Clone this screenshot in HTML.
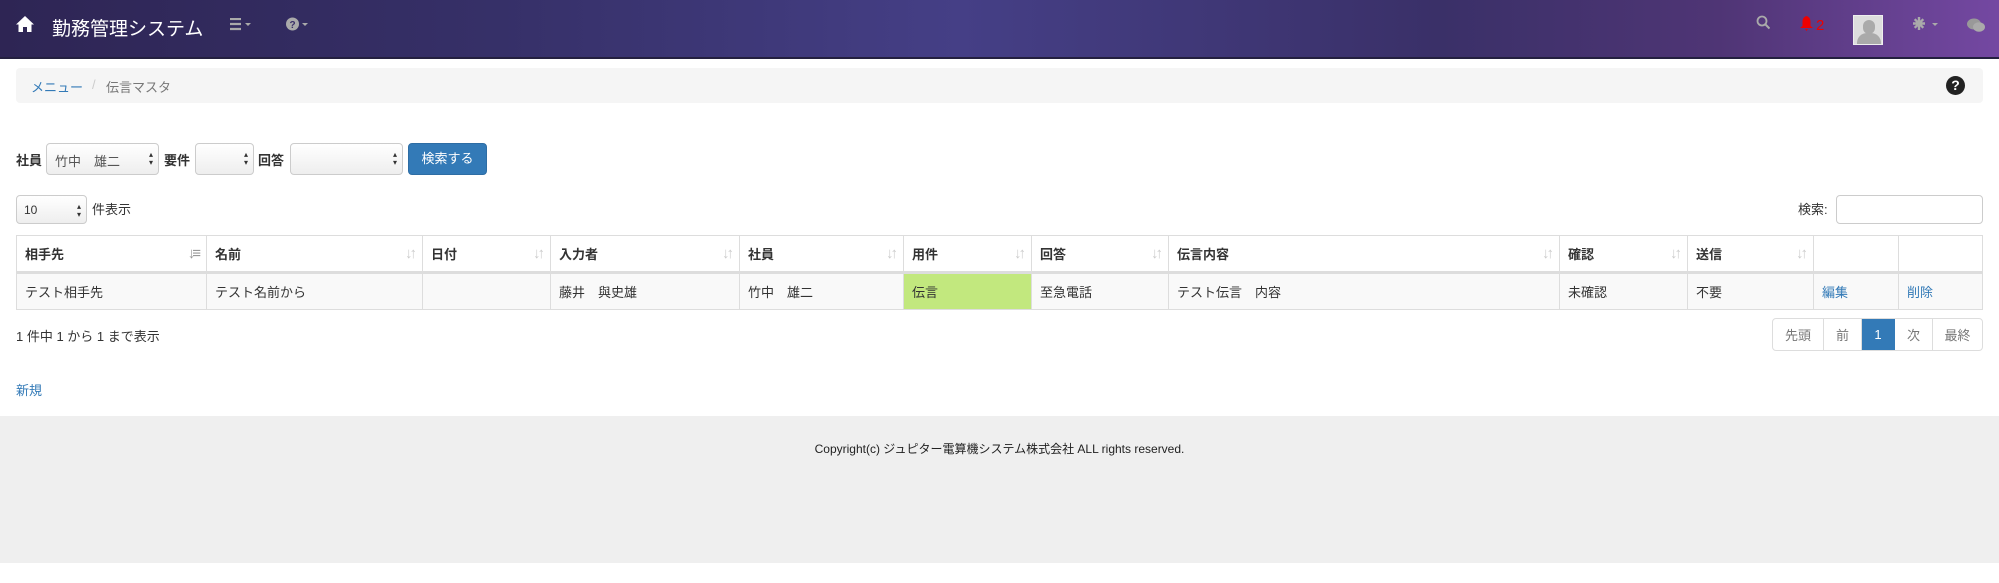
<!DOCTYPE html>
<html><head><meta charset="utf-8"><style>
*{box-sizing:border-box;margin:0;padding:0}
body{width:1999px;height:583px;overflow:hidden;background:#fff;font-family:"Liberation Sans","Noto Sans CJK JP",sans-serif;font-size:13px;color:#333;position:relative}
.a{position:absolute}
.nav{left:0;top:0;width:1999px;height:59px;background:linear-gradient(90deg,#2e2554 0%,#363068 25%,#453f86 48%,#3a3068 72%,#4f3575 86%,#7448a2 100%);border-bottom:2px solid #24203f}
.t{color:#fff;font-size:19px;left:52px;top:14px}
.g{color:#aaa}
.bc{left:16px;top:68px;width:1967px;height:35px;background:#f5f5f5;border-radius:4px}
.sel{border:1px solid #ccc;border-radius:4px;background:linear-gradient(#fff,#eee);height:32px}
.sel:after{content:"▴\A▾";white-space:pre;position:absolute;right:5px;top:7px;font-size:8px;line-height:8px;color:#333}
b{font-weight:bold}
table{position:absolute;left:16px;top:235px;border-collapse:collapse;width:1967px}
td,th{border:1px solid #ddd;padding:0 8px;text-align:left;font-size:13px}
th{height:37px;position:relative;border-bottom:3px solid #ddd}
th i{position:absolute;right:8px;top:9px;color:#ccc;font-style:normal;font-size:15px;font-weight:bold;letter-spacing:-3px}
td{height:37px;background:#f9f9f9}
.lk{color:#337ab7}
.pg{top:318px;height:33px;border:1px solid #ddd;border-radius:4px;display:flex;left:1772px;width:211px;overflow:hidden}
.pg span{border-right:1px solid #ddd;display:flex;align-items:center;justify-content:center;color:#777}
</style></head><body>
<div class="a nav">
<svg class="a" style="left:16px;top:15px" width="18" height="18" viewBox="0 0 18 18"><path d="M9 1L0 9.5h2.5V17h4.5v-5h4v5h4.5V9.5H18z" fill="#fff"/></svg>
<div class="a t">勤務管理システム</div>
<svg class="a" style="left:230px;top:18px" width="30" height="14"><path d="M0 1h11M0 6h11M0 11h11" stroke="#aaa" stroke-width="2.2"/><path d="M15 5h6l-3 3z" fill="#aaa"/></svg>
<svg class="a" style="left:286px;top:16px" width="30" height="16"><circle cx="6.5" cy="8" r="6.5" fill="#aaa"/><text x="6.5" y="12" font-size="10" font-weight="bold" text-anchor="middle" fill="#3a3068" font-family="Liberation Sans">?</text><path d="M16 7h6l-3 3z" fill="#aaa"/></svg>
<svg class="a" style="left:1756px;top:15px" width="14" height="15"><circle cx="6" cy="6" r="4.5" stroke="#aaa" stroke-width="1.8" fill="none"/><path d="M9.5 9.5l4 4" stroke="#aaa" stroke-width="2"/></svg>
<svg class="a" style="left:1800px;top:16px" width="13" height="15"><path d="M6.5 0c-3 1-4 3-4 6v4L0 12h13l-2.5-2V6c0-3-1-5-4-6zM5 13h3l-1.5 2z" fill="#e00"/></svg>
<div class="a" style="left:1816px;top:17px;color:#e00;font-size:15px">2</div>
<div class="a" style="left:1853px;top:15px;width:30px;height:30px;background:#ddd;border:1px solid #eee;overflow:hidden"><div class="a" style="left:9px;top:4px;width:12px;height:14px;border-radius:6px;background:#aaa"></div><div class="a" style="left:3px;top:17px;width:24px;height:16px;border-radius:10px 10px 0 0;background:#aaa"></div></div>
<svg class="a" style="left:1913px;top:17px" width="30" height="14"><g stroke="#aaa" stroke-width="2.4"><path d="M6 0v13M0 6.5h12M1.7 2.2l8.6 8.6M10.3 2.2l-8.6 8.6"/></g><circle cx="6" cy="6.5" r="3" fill="#aaa"/><path d="M19 6h6l-3 3z" fill="#aaa"/></svg>
<svg class="a" style="left:1967px;top:18px" width="18" height="14"><ellipse cx="7" cy="6" rx="7" ry="5.5" fill="#999"/><ellipse cx="12" cy="9" rx="6" ry="4.8" fill="#aaa"/></svg>
</div>
<div class="a bc"><span class="a lk" style="left:15px;top:9px">メニュー</span><span class="a" style="left:76px;top:9px;color:#ccc">/</span><span class="a" style="left:90px;top:9px;color:#777">伝言マスタ</span>
<div class="a" style="left:1930px;top:8px;width:19px;height:19px;border-radius:50%;background:#222;color:#fff;font-weight:bold;font-size:14px;text-align:center;line-height:19px">?</div></div>
<b class="a" style="left:16px;top:150px">社員</b>
<div class="a sel" style="left:46px;top:143px;width:113px"><span class="a" style="left:8px;top:7px;color:#555">竹中　雄二</span></div>
<b class="a" style="left:164px;top:150px">要件</b>
<div class="a sel" style="left:195px;top:143px;width:59px"></div>
<b class="a" style="left:258px;top:150px">回答</b>
<div class="a sel" style="left:290px;top:143px;width:113px"></div>
<div class="a" style="left:408px;top:143px;width:79px;height:32px;background:#337ab7;border:1px solid #2e6da4;border-radius:4px;color:#fff;text-align:center;line-height:30px">検索する</div>
<div class="a sel" style="left:16px;top:195px;width:71px;height:29px"><span class="a" style="left:7px;top:7px;font-size:12px">10</span></div>
<div class="a" style="left:92px;top:199px">件表示</div>
<div class="a" style="left:1798px;top:199px">検索:</div>
<div class="a" style="left:1836px;top:195px;width:147px;height:29px;border:1px solid #ccc;border-radius:4px"></div>
<table><tr>
<th style="width:190px">相手先<i style="color:#999">↓≡</i></th><th style="width:216px">名前<i>↓↑</i></th><th style="width:128px">日付<i>↓↑</i></th><th style="width:189px">入力者<i>↓↑</i></th><th style="width:164px">社員<i>↓↑</i></th><th style="width:128px">用件<i>↓↑</i></th><th style="width:137px">回答<i>↓↑</i></th><th style="width:391px">伝言内容<i>↓↑</i></th><th style="width:128px">確認<i>↓↑</i></th><th style="width:126px">送信<i>↓↑</i></th><th style="width:85px"></th><th></th></tr>
<tr><td>テスト相手先</td><td>テスト名前から</td><td></td><td>藤井　與史雄</td><td>竹中　雄二</td><td style="background:#c2e87e">伝言</td><td>至急電話</td><td>テスト伝言　内容</td><td>未確認</td><td>不要</td><td class="lk">編集</td><td class="lk">削除</td></tr></table>
<div class="a" style="left:16px;top:326px">1 件中 1 から 1 まで表示</div>
<div class="a pg"><span style="width:51px">先頭</span><span style="width:38px">前</span><span style="width:33px;background:#337ab7;color:#fff;border-color:#337ab7">1</span><span style="width:38px">次</span><span style="flex:1;border:0">最終</span></div>
<div class="a lk" style="left:16px;top:380px">新規</div>
<div class="a" style="left:0;top:416px;width:1999px;height:147px;background:#efefef"><div style="text-align:center;padding-top:24px;font-size:12px;color:#222">Copyright(c) ジュピター電算機システム株式会社 ALL rights reserved.</div></div>
</body></html>
